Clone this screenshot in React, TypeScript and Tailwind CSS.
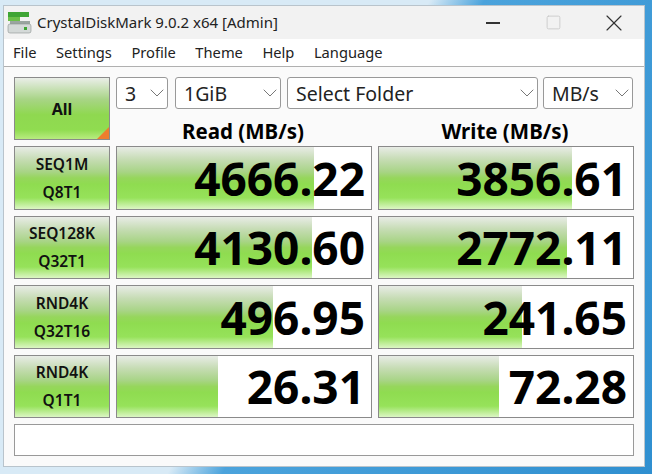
import React from "react";
import { ChevronDown, Square, X } from "lucide-react";

interface Row {
  line1: string;
  line2: string;
  read: string;
  readBar: number;
  write: string;
  writeBar: number;
}

// bar widths are pixels inside the 254px score box
const rows: Row[] = [
  { line1: "SEQ1M", line2: "Q8T1", read: "4666.22", readBar: 197, write: "3856.61", writeBar: 193 },
  { line1: "SEQ128K", line2: "Q32T1", read: "4130.60", readBar: 195, write: "2772.11", writeBar: 188 },
  { line1: "RND4K", line2: "Q32T16", read: "496.95", readBar: 156, write: "241.65", writeBar: 143 },
  { line1: "RND4K", line2: "Q1T1", read: "26.31", readBar: 101, write: "72.28", writeBar: 120 },
];

const menus = ["File", "Settings", "Profile", "Theme", "Help", "Language"];

const green =
  "bg-[linear-gradient(to_bottom,#e8ece6_0%,#c6dcb4_20%,#a8d486_40%,#96d65c_50%,#8fdc50_60%,#96e25a_82%,#dcf6c4_100%)]";

const Combo = ({ label, className }: { label: string; className: string }) => (
  <div
    className={`h-[32px] flex items-center justify-between bg-white border border-[#999] rounded-[3px] pl-[8px] text-[19.5px] text-[#222] ${className}`}
  >
    <span className="pt-[1px]">{label}</span>
    <ChevronDown size={24} strokeWidth={1} className="text-[#777] -mr-[2px] shrink-0" />
  </div>
);

const Score = ({ value, bar }: { value: string; bar: number }) => (
  <div className="relative h-[63.5px] mt-[6px] border border-[#8a8a8a] bg-white">
    <div className={`h-full ${green}`} style={{ width: bar }} />
    <div className="absolute inset-0 flex items-center justify-end pr-[6px] text-[46px] font-bold text-black leading-none">
      {value}
    </div>
  </div>
);

export default function App() {
  return (
    <div
      className="w-[652px] h-[474px] overflow-hidden pt-[5px] pl-[3px] bg-[linear-gradient(119deg,#d8eaf6_0%,#d8eaf6_47%,#4ba3dc_53%,#2f8fd0_100%)]"
      style={{ fontFamily: '"Noto Sans", sans-serif' }}
    >
      <div className="w-[642px] h-[462px] bg-[#fafafa] border border-[#b9c4cc] flex flex-col">
        <div className="h-[33px] flex items-center bg-[#f2f2f2] pl-[3px] shrink-0">
          <svg width="26" height="24" viewBox="0 0 26 24">
            <rect x="1" y="1" width="21" height="5" fill="#3fa535" />
            <rect x="1" y="6" width="12" height="4" fill="#6cc04a" />
            <rect x="3" y="10" width="20" height="3" fill="#9aa5a0" />
            <rect x="1" y="13" width="23" height="9" rx="2" fill="#d4d9d8" stroke="#8b9290" strokeWidth="0.6" />
            <rect x="17" y="16" width="3" height="3" fill="#3fa535" />
          </svg>
          <span className="ml-[4px] text-[15px] text-[#222]">CrystalDiskMark 9.0.2 x64 [Admin]</span>
          <div className="ml-auto flex items-center text-[#333] pr-[16px]">
            <div className="w-[14px] h-[2px] bg-[#333] mr-[45px]" />
            <Square size={17} strokeWidth={1.2} className="mr-[38px] text-[#c8c8c8]" />
            <X size={28} strokeWidth={1} />
          </div>
        </div>
        <div className="h-[28px] flex items-center bg-white border-b border-[#b0b0b0] pl-[9px] gap-[19.5px] text-[14.7px] text-[#222] shrink-0">
          {menus.map((m) => (
            <span key={m}>{m}</span>
          ))}
        </div>
        <div className="flex-1 px-[10px] pt-[10px]">
          <div className="grid grid-cols-[96px_256px_256px] gap-x-[6px]">
            <div className="relative h-[63px] border border-[#8a8a8a] bg-[linear-gradient(to_bottom,#eaeee8_0%,#a8d486_35%,#8fd850_60%,#90dc50_85%,#b8ec80_100%)] flex items-center justify-center text-[16px] font-bold text-[#111]">
              All
              <div className="absolute right-0 bottom-0 w-0 h-0 border-l-[12px] border-l-transparent border-b-[12px] border-b-[#ee7d2e]" />
            </div>
            <div className="col-span-2 h-[63px] flex flex-col">
              <div className="flex">
                <Combo label="3" className="w-[52px]" />
                <Combo label="1GiB" className="w-[106px] ml-[7px]" />
                <Combo label="Select Folder" className="w-[251px] ml-[6px]" />
                <Combo label="MB/s" className="w-[90px] ml-[5px]" />
              </div>
              <div className="grid grid-cols-2 gap-x-[6px] mt-[12px] text-[20.5px] font-bold text-black text-center leading-[20px]">
                <span className="pr-[2px]">Read (MB/s)</span>
                <span className="pr-[2px]">Write (MB/s)</span>
              </div>
            </div>
            {rows.map((r) => (
              <React.Fragment key={r.line1 + r.line2}>
                <div
                  className={`h-[63.5px] mt-[6px] border border-[#8a8a8a] flex flex-col items-center justify-center text-[15.5px] font-semibold text-[#111] leading-[28px] ${green}`}
                >
                  <span>{r.line1}</span>
                  <span>{r.line2}</span>
                </div>
                <Score value={r.read} bar={r.readBar} />
                <Score value={r.write} bar={r.writeBar} />
              </React.Fragment>
            ))}
          </div>
          <div className="h-[32px] mt-[6px] w-[620px] bg-white border border-[#999]" />
        </div>
      </div>
    </div>
  );
}
